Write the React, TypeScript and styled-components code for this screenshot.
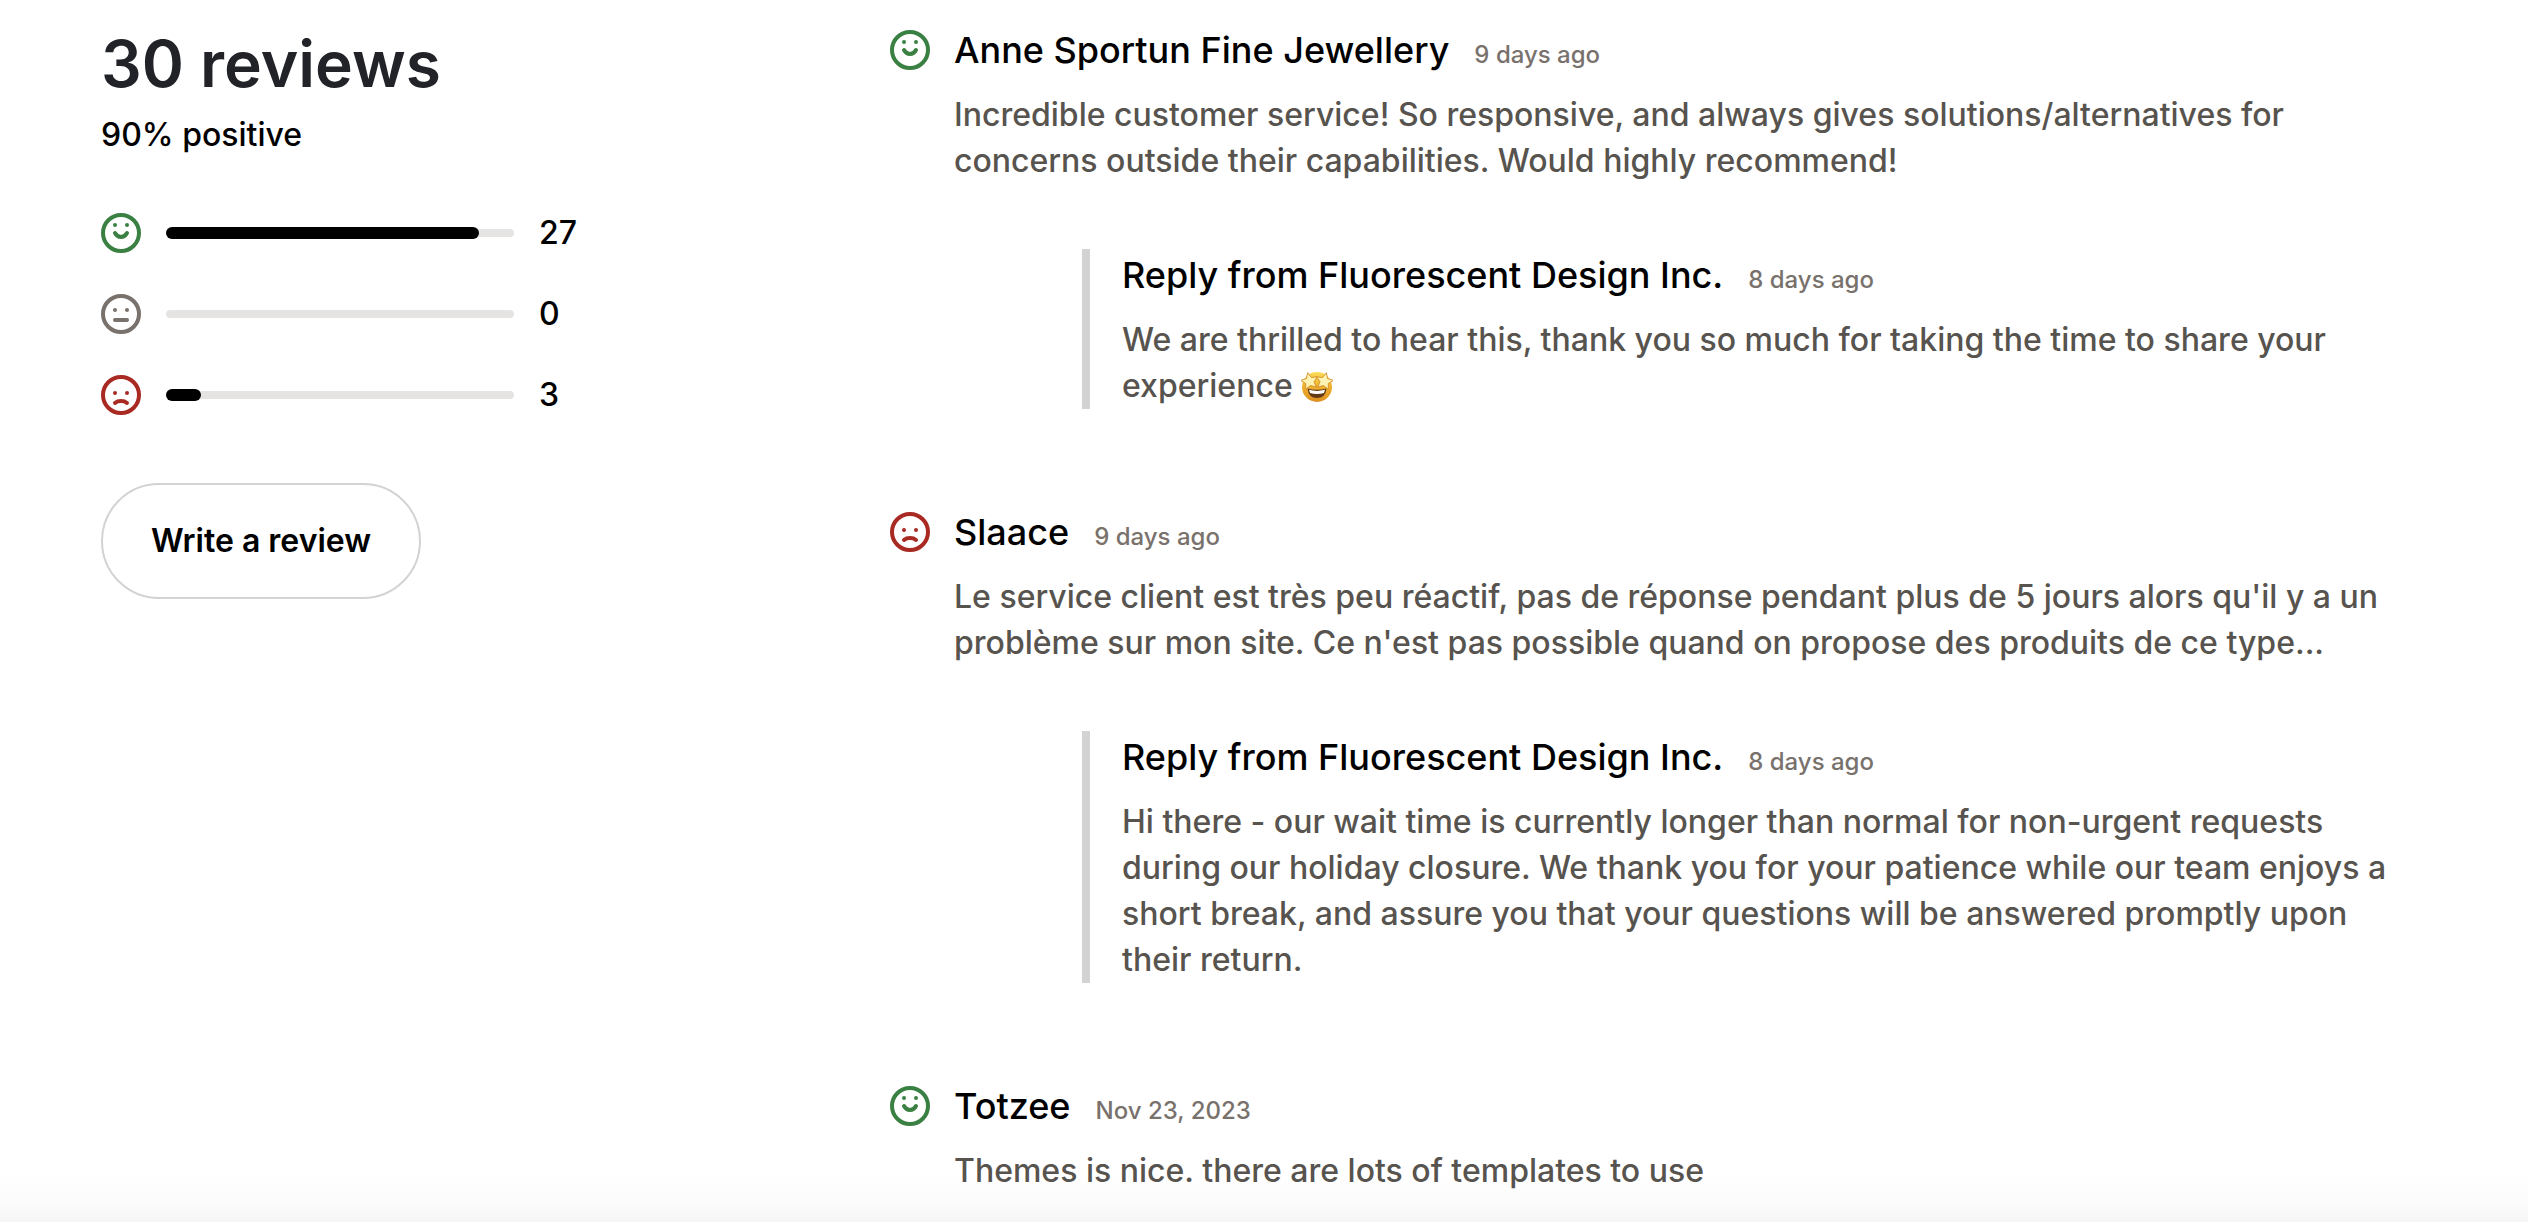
import React from "react";
import styled, { createGlobalStyle } from "styled-components";

const GlobalStyle = createGlobalStyle`
  *, *::before, *::after { box-sizing: border-box; }
  body {
    margin: 0;
    background: #ffffff;
    color: #000000;
    font-family: Inter, "Noto Sans", sans-serif;
    font-size: 32px;
    line-height: 46px;
    font-weight: 500;
    -webkit-font-smoothing: antialiased;
  }
  h1, h2, h3, p, ul, dl, dd { margin: 0; padding: 0; }
`;

type Mood = "positive" | "neutral" | "negative";

const moodColors: Record<Mood, string> = {
  positive: "#3b8043",
  neutral: "#78716c",
  negative: "#a82a23",
};

const Page = styled.main`
  display: grid;
  grid-template-columns: repeat(12, minmax(0, 1fr));
  column-gap: 41px;
  align-items: start;
  min-height: 100vh;
  padding: 24px 101px;
  background: linear-gradient(to top, #f6f6f6 0, #fcfcfc 20px, #ffffff 48px);
`;

const Summary = styled.section`
  grid-column: span 4;
  display: flex;
  flex-direction: column;
  align-items: flex-start;
`;

const Total = styled.h1`
  font-size: 64px;
  line-height: 80px;
  font-weight: 600;
  color: #222328;
`;

const Share = styled.p`
  margin-top: 8px;
`;

const Breakdown = styled.ul`
  width: 100%;
  max-width: 476px;
  margin-top: 52px;
  list-style: none;
  display: flex;
  flex-direction: column;
  gap: 35px;
`;

const BreakdownRow = styled.li`
  display: flex;
  align-items: center;
  gap: 25px;
`;

const Track = styled.div`
  flex: 1;
  height: 8px;
  border-radius: 4px;
  background: #e5e4e2;
  display: flex;
  align-items: center;
`;

const Fill = styled.div`
  height: 12px;
  border-radius: 6px;
  background: #000000;
`;

const Count = styled.span`
  width: 38px;
`;

const WriteButton = styled.button`
  margin-top: 65px;
  padding: 33px 48px;
  border: 2px solid #d3d3d3;
  border-radius: 58px;
  background: transparent;
  color: #000000;
  font: inherit;
  font-weight: 600;
  cursor: pointer;
`;

const Reviews = styled.section`
  grid-column: span 8;
  display: flex;
  flex-direction: column;
  gap: 97px;
`;

const ReviewItem = styled.article`
  display: grid;
  grid-template-columns: 40px minmax(0, 1fr);
  column-gap: 24px;
`;

const IconCell = styled.div`
  height: 52px;
  display: flex;
  align-items: center;
`;

const ReviewContent = styled.div`
  padding-right: 32px;
`;

const Header = styled.header`
  display: flex;
  align-items: baseline;
  gap: 25px;
  margin-bottom: 16px;
`;

const Author = styled.h2`
  font-size: 36px;
  line-height: 52px;
  font-weight: 500;
`;

const PostedAt = styled.time`
  font-size: 24px;
  line-height: 36px;
  color: #78716c;
`;

const Message = styled.p`
  color: #57534e;
`;

const Reply = styled.div`
  margin-top: 65px;
  margin-left: 128px;
  padding-left: 32px;
  border-left: 8px solid #d3d3d3;
`;

const FaceSvg = styled.svg`
  flex: none;
  display: block;
  width: 40px;
  height: 40px;
`;

const StarFaceSvg = styled.svg`
  display: inline-block;
  width: 32px;
  height: 32px;
  vertical-align: -6px;
`;

const eyeLevel: Record<Mood, number> = { positive: 12, neutral: 16, negative: 18 };
const mouths: Record<Mood, string> = {
  positive: "M14 20C16.8 25.2 23.2 25.2 26 20",
  neutral: "M14 26H26",
  negative: "M14 28C17 25.4 23 25.4 26 28",
};

function Face({ mood }: { mood: Mood }) {
  const color = moodColors[mood];
  return (
    <FaceSvg viewBox="0 0 40 40" fill="none" role="img" aria-label={mood}>
      <circle cx="20" cy="20" r="18" stroke={color} strokeWidth="4" />
      <circle cx="14" cy={eyeLevel[mood]} r="2" fill={color} />
      <circle cx="26" cy={eyeLevel[mood]} r="2" fill={color} />
      <path d={mouths[mood]} stroke={color} strokeWidth="4" strokeLinecap="round" />
    </FaceSvg>
  );
}

function StarStruck() {
  const star = "M0 -8.5L2.6 -3L8.5 -2.5L4.2 1.7L5.4 7.4L0 4.6L-5.4 7.4L-4.2 1.7L-8.5 -2.5L-2.6 -3Z";
  return (
    <StarFaceSvg viewBox="0 0 32 32" role="img" aria-label="star-struck">
      <defs>
        <linearGradient id="starFace" x1="0" y1="0" x2="0" y2="1">
          <stop offset="0" stopColor="#fbdc58" />
          <stop offset="0.5" stopColor="#efb02f" />
          <stop offset="1" stopColor="#dd8f1f" />
        </linearGradient>
      </defs>
      <circle cx="16" cy="16" r="15" fill="url(#starFace)" />
      <path d="M6.5 17.5Q16 20 25.5 17.5Q24.5 27 16 27Q7.5 27 6.5 17.5Z" fill="#633a17" />
      <path d="M8 18.8Q16 21 24 18.8L23 22Q16 24 9 22Z" fill="#ffffff" />
      <path d={star} transform="translate(8.5 10) rotate(-12)" fill="#fff3b4" stroke="#cf8a22" strokeWidth="0.8" />
      <path d={star} transform="translate(23.5 10) rotate(12)" fill="#fff3b4" stroke="#cf8a22" strokeWidth="0.8" />
    </StarFaceSvg>
  );
}

const breakdown: { mood: Mood; count: number }[] = [
  { mood: "positive", count: 27 },
  { mood: "neutral", count: 0 },
  { mood: "negative", count: 3 },
];

interface Entry {
  author: string;
  posted: string;
  message: React.ReactNode;
}

const reviews: (Entry & { mood: Mood; reply?: Entry })[] = [
  {
    mood: "positive",
    author: "Anne Sportun Fine Jewellery",
    posted: "9 days ago",
    message:
      "Incredible customer service! So responsive, and always gives solutions/alternatives for concerns outside their capabilities. Would highly recommend!",
    reply: {
      author: "Reply from Fluorescent Design Inc.",
      posted: "8 days ago",
      message: (
        <>
          We are thrilled to hear this, thank you so much for taking the time to share your
          experience <StarStruck />
        </>
      ),
    },
  },
  {
    mood: "negative",
    author: "Slaace",
    posted: "9 days ago",
    message:
      "Le service client est très peu réactif, pas de réponse pendant plus de 5 jours alors qu'il y a un problème sur mon site. Ce n'est pas possible quand on propose des produits de ce type...",
    reply: {
      author: "Reply from Fluorescent Design Inc.",
      posted: "8 days ago",
      message:
        "Hi there - our wait time is currently longer than normal for non-urgent requests during our holiday closure. We thank you for your patience while our team enjoys a short break, and assure you that your questions will be answered promptly upon their return.",
    },
  },
  {
    mood: "positive",
    author: "Totzee",
    posted: "Nov 23, 2023",
    message: "Themes is nice. there are lots of templates to use",
  },
];

function EntryBody({ author, posted, message }: Entry) {
  return (
    <>
      <Header>
        <Author>{author}</Author>
        <PostedAt>{posted}</PostedAt>
      </Header>
      <Message>{message}</Message>
    </>
  );
}

export default function App() {
  const total = breakdown.reduce((sum, row) => sum + row.count, 0);
  return (
    <>
      <GlobalStyle />
      <Page>
        <Summary>
          <Total>{total} reviews</Total>
          <Share>90% positive</Share>
          <Breakdown>
            {breakdown.map(({ mood, count }) => (
              <BreakdownRow key={mood}>
                <Face mood={mood} />
                <Track>
                  <Fill style={{ width: `${(count / total) * 100}%` }} />
                </Track>
                <Count>{count}</Count>
              </BreakdownRow>
            ))}
          </Breakdown>
          <WriteButton type="button">Write a review</WriteButton>
        </Summary>
        <Reviews>
          {reviews.map(({ mood, reply, ...entry }) => (
            <ReviewItem key={entry.author}>
              <IconCell>
                <Face mood={mood} />
              </IconCell>
              <ReviewContent>
                <EntryBody {...entry} />
                {reply && (
                  <Reply>
                    <EntryBody {...reply} />
                  </Reply>
                )}
              </ReviewContent>
            </ReviewItem>
          ))}
        </Reviews>
      </Page>
    </>
  );
}
